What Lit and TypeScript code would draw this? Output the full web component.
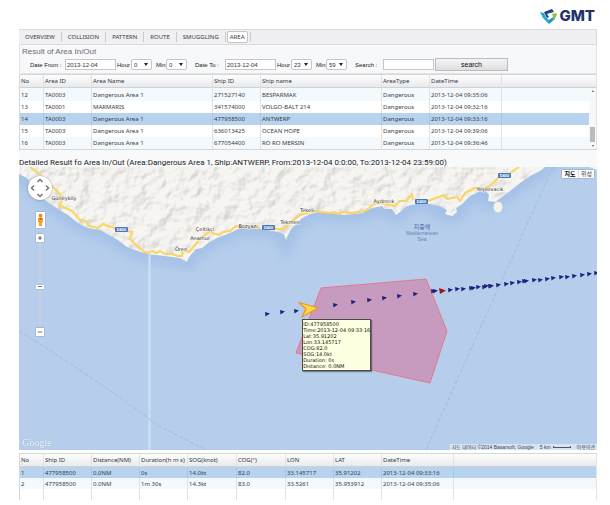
import { LitElement, html, css, svg } from "lit";
import { customElement, property } from "lit/decorators.js";
import { classMap } from "lit/directives/class-map.js";

const AREA_COLUMNS = ["No", "Area ID", "Area Name", "Ship ID", "Ship name", "AreaType", "DateTime", ""];
const AREA_ROWS = [
  ["12", "TA0003", "Dangerous Area 1", "271527140", "BESPARMAK", "Dangerous", "2013-12-04 09:35:06", ""],
  ["13", "TA0001", "MARMARIS", "341574000", "VOLGO-BALT 214", "Dangerous", "2013-12-04 09:32:16", ""],
  ["14", "TA0003", "Dangerous Area 1", "477958500", "ANTWERP", "Dangerous", "2013-12-04 09:33:16", ""],
  ["15", "TA0003", "Dangerous Area 1", "636013425", "OCEAN HOPE", "Dangerous", "2013-12-04 09:39:06", ""],
  ["16", "TA0003", "Dangerous Area 1", "677054400", "RO RO MERSIN", "Dangerous", "2013-12-04 09:36:46", ""],
];
const DETAIL_COLUMNS = ["No", "Ship ID", "Distance(NM)", "Duration(h m s)", "SOG(knot)", "COG(°)", "LON", "LAT", "DateTime", ""];
const DETAIL_ROWS = [
  ["1", "477958500", "0.0NM", "0s", "14.0kt", "82.0", "33.145717", "35.91202", "2013-12-04 09:33:16", ""],
  ["2", "477958500", "0.0NM", "1m 30s", "14.3kt", "83.0", "33.5261", "35.953912", "2013-12-04 09:35:06", ""],
];

@customElement("data-grid")
class DataGrid extends LitElement {
  @property({ attribute: false }) columns: string[] = [];
  @property({ attribute: false }) rows: string[][] = [];
  @property({ attribute: false }) widths: number[] = [];
  @property({ type: Number }) selected = 0;
  @property({ type: Boolean }) scrollable = false;

  static styles = css`
    :host { display: block; position: relative; border: 1px solid #d4d7da; border-right-color: #e2e4e6; }
    :host(:not([scrollable])) { border-bottom: 0; }
    table { width: 100%; border-collapse: separate; border-spacing: 0; table-layout: fixed; }
    th, td { font: 400 6px/8px "Noto Sans", "Open Sans", sans-serif; color: #3c3c40; text-align: left; padding: 0 1px; border-right: 1px solid #dfe3e7; white-space: nowrap; overflow: hidden; }
    th { height: 12px; padding: 0 1px; color: #33363a; background: linear-gradient(#fdfdfd, #e9eaec); border-bottom: 1px solid #cfd2d5; }
    td { height: 11px; box-sizing: border-box; }
    th:last-child, td:last-child { border-right: 0; }
    :host([scrollable]) td { height: 12px; }
    :host([scrollable]) tbody tr:first-child td { height: 13px; padding-top: 1px; }
    tr.odd td { background: #f4f9fe; }
    tr.selected td { background: #b8d3ef; border-right-color: #a9c6e4; }
    .scroll { position: absolute; right: 0; top: 13px; bottom: 0; width: 7px; background: #f7f8f9; display: flex; flex-direction: column; align-items: center; }
    .arrow { width: 0; height: 0; border: 1px solid transparent; border-top: 0; border-bottom: 2px solid #555; margin: 2px 0; }
    .arrow.down { border-top: 2px solid #555; border-bottom: 0; margin-top: auto; }
    .thumb { width: 5px; height: 15px; background: #bcbcbc; margin-top: 33px; }
  `;

  render() {
    return html`
      <table>
        <colgroup>${this.widths.map((w) => html`<col width=${w} />`)}<col /></colgroup>
        <thead><tr>${this.columns.map((c) => html`<th scope="col">${c}</th>`)}</tr></thead>
        <tbody>
          ${this.rows.map(
            (row, i) => html`<tr class=${classMap({ odd: i % 2 === (this.scrollable ? 0 : 1), selected: i === this.selected })}>
              ${row.map((cell) => html`<td>${cell}</td>`)}
            </tr>`
          )}
          ${this.scrollable ? "" : html`<tr>${this.columns.map(() => html`<td></td>`)}</tr>`}
        </tbody>
      </table>
      ${this.scrollable
        ? html`<div class="scroll"><span class="arrow"></span><span class="thumb"></span><span class="arrow down"></span></div>`
        : ""}
    `;
  }
}

const LAND =
  "M19 167V174L27 178L33 187L45 200L55 207L68 215L78 223L88 228L100 230L104 232L118 240L127 247L138 251L148 254L165 256L180 258L187 262L189 257L196 249L202 248L208 243L217 238L232 232L240 228L252 228L262 229L278 232L284 234L286 240L289 233L291 229L298 222L302 218L310 214L318 212L330 213L345 215L362 213L372 208L382 206L384 209L392 209L396 215L400 212L407 206L420 203L430 204L440 206L447 210L445 214L452 216L457 212L456 208L462 204L470 196L480 191L486 191L489 195L488 201L495 202L510 191L520 183L530 176L540 171L545 167Z";
const ROAD =
  "M30 167L41 175M52 186L60 194L62 201L59 205L72 211L80 220L86 221L89 226L98 228L103 224L108 226L118 229M128 231L132 232L130 239L138 247L145 252L149 253L152 251L157 253L160 251L165 254L172 254L178 256L182 256L183 250L189 252L200 239L209 232L219 235L223 232L230 231L236 226L260 228M274 229L283 229L290 223L300 215L314 211L330 213L334 212L338 214L343 212L352 213L365 211L374 204L380 203L395 206L400 201L406 201L412 194L413 200M428 201L444 195L447 199L457 197L460 201L465 193L475 188L484 189L492 184L500 176M510 173L519 167";
const TRACK: [number, number][] = [
  [267, 314], [282, 312], [296, 311], [335, 305], [353, 302], [369, 300], [384, 298], [399, 296], [415, 294],
  [433, 291], [435, 291], [450, 290], [457, 289], [463, 289], [471, 288], [473, 288], [478, 287], [484, 287], [486, 286],
  [490, 286], [491, 286], [498, 285], [506, 284], [512, 283], [519, 282], [524, 281], [526, 281], [534, 280], [540, 280],
  [547, 279], [553, 278], [561, 277], [567, 277], [574, 276], [582, 275], [589, 274], [596, 273],
];
const ROAD_SIGNS = [[121, 229], [268, 227], [421, 201], [504, 175]];
const PLACES: [string, number, number][] = [
  ["Güneyköy", 64, 200], ["Çeltikçi", 205, 231], ["Anamur", 200, 240], ["Ören", 181, 251], ["Bozyazı", 248, 228],
  ["Tekmen", 290, 224], ["Tekeli", 307, 212], ["Aydıncık", 384, 203], ["Yeşilovacık", 490, 191],
];

@customElement("sea-map")
class SeaMap extends LitElement {
  static styles = css`
    :host { display: block; position: relative; height: 283px; overflow: hidden; background: #b6ceec; font-family: "Liberation Sans", "Noto Sans CJK KR", sans-serif; }
    .canvas { display: block; width: 100%; height: 100%; }
    .place { font: 5px "DejaVu Sans", sans-serif; fill: #2e2e2e; text-anchor: middle; paint-order: stroke; stroke: #fffc; stroke-width: 1px; }
    .sign { font: 700 4px "Liberation Sans", sans-serif; fill: #fff; text-anchor: middle; }
    .sea-ko { font: 6px "Noto Sans CJK KR", sans-serif; fill: #48689b; text-anchor: middle; }
    .sea-en { font: 5px "Liberation Sans", sans-serif; fill: #6585b5; text-anchor: middle; }
    .tip { position: absolute; left: 49%; top: 152px; border: 1px solid #4c4c48; background: #ffffe1; padding: 1px 0; box-shadow: 1px 1px 1px #0006; font: 5px/6px "DejaVu Sans", sans-serif; color: #111; white-space: nowrap; }
    .controls { position: absolute; left: 9px; top: 9px; width: 24px; display: flex; flex-direction: column; align-items: center; }
    button { font-family: inherit; padding: 0; border: 0; background: #fff; color: #555; cursor: pointer; }
    .pan { width: 24px; height: 24px; border-radius: 50%; box-shadow: 0 0 2px #0006; }
    .pan svg, .pegman svg, .step svg { display: block; margin: auto; }
    .pegman { width: 9px; height: 16px; margin-top: 12px; box-shadow: 0 0 1px #0008; }
    .step { width: 8px; height: 8px; box-shadow: 0 0 1px #0009; }
    .plus { margin-top: 6px; }
    .zoom { appearance: none; writing-mode: vertical-lr; direction: rtl; width: 8px; height: 86px; margin: 0; background: linear-gradient(#c5cde0, #c5cde0) center / 2px 100% no-repeat; }
    .zoom::-webkit-slider-thumb { appearance: none; width: 8px; height: 4px; background: linear-gradient(#777, #777) center / 4px 1px no-repeat, #fff; box-shadow: 0 0 1px #0009; }
    .types { position: absolute; right: 3px; top: 3px; display: flex; box-shadow: 0 0 1px #0009; }
    .types button { width: 16px; height: 8px; font: 6px/8px "Noto Sans CJK KR", sans-serif; border-left: 1px solid #ddd; color: #444; }
    .types .on { font-weight: 700; color: #000; border-left: 0; }
    .google { position: absolute; left: 3px; bottom: 1px; font: 10px/12px "Liberation Serif", serif; color: #fff; text-shadow: 0 0 1px #6d88b0; text-decoration: none; }
    .credits { position: absolute; right: 0; bottom: 0; height: 6px; padding: 0 2px; display: flex; gap: 6px; align-items: center; background: #d7e4f5; font: 5px/6px "Liberation Sans", "Noto Sans CJK KR", sans-serif; color: #444; white-space: nowrap; }
    .credits a { color: inherit; text-decoration: none; }
    .scale { display: flex; gap: 2px; align-items: center; }
    .bar { width: 18px; height: 2px; border: 1px solid #555; border-top: 0; box-sizing: border-box; }
  `;

  render() {
    return html`
      <svg class="canvas" viewBox="19 167 578 283" preserveAspectRatio="xMidYMid slice" role="img" aria-label="Map">
        <defs>
          <clipPath id="land"><path d=${LAND} /></clipPath>
          <filter id="relief" x="0" y="0" width="100%" height="100%" color-interpolation-filters="sRGB">
            <feTurbulence type="fractalNoise" baseFrequency="0.07" numOctaves="3" seed="8" />
            <feDiffuseLighting lighting-color="#f6f5f1" surfaceScale="3" diffuseConstant="1.2">
              <feDistantLight azimuth="225" elevation="56" />
            </feDiffuseLighting>
          </filter>
          <filter id="soft"><feGaussianBlur stdDeviation="6" /></filter>
        </defs>
        <path d=${LAND} fill="none" stroke="#a3c0e6" stroke-width="16" filter="url(#soft)" />
        <path d=${LAND} fill="#f3f2ed" />
        <g clip-path="url(#land)"><rect x="19" y="167" width="578" height="110" filter="url(#relief)" opacity="0.27" /></g>
        <ellipse cx="498" cy="207" rx="4.5" ry="5.5" fill="#f3f2ec" />
        <path d="M589 167h8v3z" fill="#f3f2ec" />
        <path d="M149.500 254V450" stroke="#d3e1f3" stroke-width="2" />
        <path d="M553 167L511 260L475 340L426 450M19 331Q110 388 157 425L206 450" fill="none" stroke="#98b6da" stroke-dasharray="4 2" stroke-width="0.8" />
        <path d=${ROAD} fill="none" stroke="#f1cf6b" stroke-width="2" stroke-linejoin="round" />
        <path d=${ROAD} fill="none" stroke="#ffd95c" stroke-width="1.200" stroke-linejoin="round" />
        ${ROAD_SIGNS.map(
          ([x, y]) => svg`<rect x=${x - 6} y=${y - 2} width="13" height="5" rx="1" fill="#4878b8" />
            <text class="sign" x=${x + 0.5} y=${y + 2}>D400</text>`
        )}
        ${PLACES.map(([name, x, y]) => svg`<text class="place" x=${x} y=${y}>${name}</text>`)}
        <text class="sea-ko" x="422" y="229">지중해</text>
        <text class="sea-en" x="422" y="235">Mediterranean</text>
        <text class="sea-en" x="422" y="241">Sea</text>
        <path d="M321 288L426 279L447 331L430 383L296 353Z" fill="#c79bc0" stroke="#e2788c" />
        ${TRACK.map(([x, y]) => svg`<path d=${`M${x - 2} ${y - 2}l5 1.500l-4.500 3z`} fill="#20207c" />`)}
        <path d="M439 288l7 2.500l-6 3.500z" fill="#a01818" />
        <path d="M299 302.500L318 308L302 317L306 309Z" fill="#ffdc3c" stroke="#f0932b" stroke-width="1.300" stroke-linejoin="round" />
      </svg>

      <div class="tip">
        <div>ID:477958500</div>
        <div>Time:2013-12-04 09:33:16</div>
        <div>Lat:35.91202</div>
        <div>Lon:33.145717</div>
        <div>COG:82.0</div>
        <div>SOG:14.0kt</div>
        <div>Duration: 0s</div>
        <div>Distance: 0.0NM</div>
      </div>

      <div class="controls">
        <button class="pan" aria-label="Pan">
          <svg width="22" height="22" viewBox="0 0 22 22" fill="none" stroke="#777" stroke-width="1.500">
            <path d="M8.500 5L11 2.500L13.500 5M8.500 17L11 19.500L13.500 17M5 8.500L2.500 11L5 13.500M17 8.500L19.500 11L17 13.500" />
          </svg>
        </button>
        <button class="pegman" aria-label="Street View">
          <svg width="7" height="14" viewBox="0 0 7 14">
            <path d="M1 5h5v4l-1 .5V13H2V9.500L1 9z" fill="#f2a325" />
            <circle cx="3.500" cy="2.800" r="2" fill="#e8891c" />
            <path d="M2 5l1.500 2L5 5z" fill="#c8452a" />
          </svg>
        </button>
        <button class="step plus" aria-label="Zoom in">
          <svg width="6" height="6" viewBox="0 0 6 6" stroke="#666"><path d="M1 3h4M3 1v4" /></svg>
        </button>
        <input class="zoom" type="range" min="0" max="100" value="48" aria-label="Zoom" />
        <button class="step" aria-label="Zoom out">
          <svg width="6" height="6" viewBox="0 0 6 6" stroke="#666"><path d="M1 3h4" /></svg>
        </button>
      </div>

      <div class="types"><button class="on">지도</button><button>위성</button></div>
      <a class="google" href="#">Google</a>
      <div class="credits">
        <span>지도 데이터 ©2014 Basarsoft, Google</span>
        <span class="scale">5 km <span class="bar"></span></span>
        <a href="#">이용약관</a>
      </div>
    `;
  }
}

@customElement("app-root")
class AppRoot extends LitElement {
  static styles = css`
    :host { display: block; padding: 0 13px 5px 19px; background: #fff; font-family: "Liberation Sans", sans-serif; color: #222; }
    header { height: 29px; padding: 3px 2px 0 0; box-sizing: border-box; display: flex; justify-content: flex-end; align-items: center; gap: 2px; }
    .brand { font: 800 15px/16px Inter, sans-serif; color: #22336b; }
    nav { display: flex; align-items: center; height: 16px; box-sizing: border-box; border: 1px solid #d9dadc; border-left: 0; background: #f0f0f2; }
    nav a { font: 6px/10px "Noto Sans", sans-serif; color: #3a3a3e; text-decoration: none; padding: 0 6px; border-right: 1px solid #c9cacc; }
    nav .current { padding: 0 2px; margin: 0 2px 0 1px; background: #fff; border: 1px solid #c4c4c8; border-radius: 2px; }
    nav .end { height: 10px; border-right: 1px solid #c9cacc; }
    .panel { height: 29px; padding: 1px 2px; box-sizing: border-box; background: #f7f8fa; border: 1px solid #e3e4e8; border-top: 0; }
    h1 { margin: 0; font: 8px/12px "Liberation Sans", sans-serif; color: #6c6c70; }
    form { display: flex; align-items: center; height: 13px; padding-left: 8px; font-size: 6px; line-height: 10px; color: #222; white-space: nowrap; }
    label { flex: none; }
    .from { width: 35px; }
    .hour { width: 14px; }
    .min { width: 10px; margin-left: 4px; }
    .to { width: 30px; margin-left: 8px; }
    .find { width: 28px; margin-left: 8px; }
    input, select { font: 6px/8px "Liberation Sans", sans-serif; color: #333; border: 1px solid #c6c6ca; background: #fff; height: 11px; box-sizing: border-box; padding: 0 1px; margin: 0; }
    input { width: 51px; margin-right: 1px; }
    .pick { position: relative; display: block; }
    select { display: block; width: 21px; appearance: none; border-radius: 2px; padding-left: 2px; }
    .pick::after { content: ""; position: absolute; right: 4px; top: 4px; border: 2px solid transparent; border-top: 3px solid #222; border-bottom: 0; pointer-events: none; }
    form button { width: 73px; height: 13px; padding: 0; font: 7px/10px "Liberation Sans", sans-serif; color: #111; border: 1px solid #bcbcc0; background: linear-gradient(#f4f4f4, #dfdfe1); }
    h2 { margin: 0; height: 17px; padding-top: 8px; box-sizing: border-box; font: 8px/9px Roboto, sans-serif; color: #222; background: #f8f9fb; white-space: nowrap; }
    .details { margin-top: 3px; }
  `;

  private pick(id: string, value: string) {
    return html`<span class="pick"><select id=${id}><option>${value}</option></select></span>`;
  }

  render() {
    return html`
      <header>
        <svg width="17" height="15" viewBox="0 0 17 15" aria-hidden="true">
          <path d="M0 3l4 1 2 4 3 3v4L3 9z" fill="#2aa9d2" />
          <path d="M4 3l8-3 2 3-4 1-3 1 2 3-2 1z" fill="#22427f" />
          <path d="M9 11l4-3 3-3-1 5-6 5z" fill="#1d93c8" />
          <path d="M12 5l4-1 1 2-3 4-2 1 1-3z" fill="#8cc152" />
        </svg>
        <span class="brand">GMT</span>
      </header>
      <nav>
        <a href="#">OVERVIEW</a><a href="#">COLLISION</a><a href="#">PATTERN</a><a href="#">ROUTE</a><a href="#">SMUGGLING</a>
        <a class="current" href="#" aria-current="page">AREA</a><span class="end"></span>
      </nav>
      <section class="panel">
        <h1>Result of Area In/Out</h1>
        <form>
          <label class="from" for="from">Date From :</label><input id="from" value="2013-12-04" />
          <label class="hour" for="h1">Hour</label>${this.pick("h1", "0")}
          <label class="min" for="m1">Min</label>${this.pick("m1", "0")}
          <label class="to" for="to">Date To :</label><input id="to" value="2013-12-04" />
          <label class="hour" for="h2">Hour</label>${this.pick("h2", "23")}
          <label class="min" for="m2">Min</label>${this.pick("m2", "59")}
          <label class="find" for="q">Search :</label><input id="q" />
          <button type="button">search</button>
        </form>
      </section>
      <data-grid scrollable .columns=${AREA_COLUMNS} .rows=${AREA_ROWS} .widths=${[24, 48, 121, 48, 121, 48, 72]} selected="2"></data-grid>
      <h2>Detailed Result fo Area In/Out (Area:Dangerous Area 1, Ship:ANTWERP, From:2013-12-04 0:0:00, To:2013-12-04 23:59:00)</h2>
      <sea-map></sea-map>
      <data-grid class="details" .columns=${DETAIL_COLUMNS} .rows=${DETAIL_ROWS} .widths=${[24, 48, 48, 48, 49, 49, 48, 48, 72]} selected="0"></data-grid>
    `;
  }
}
